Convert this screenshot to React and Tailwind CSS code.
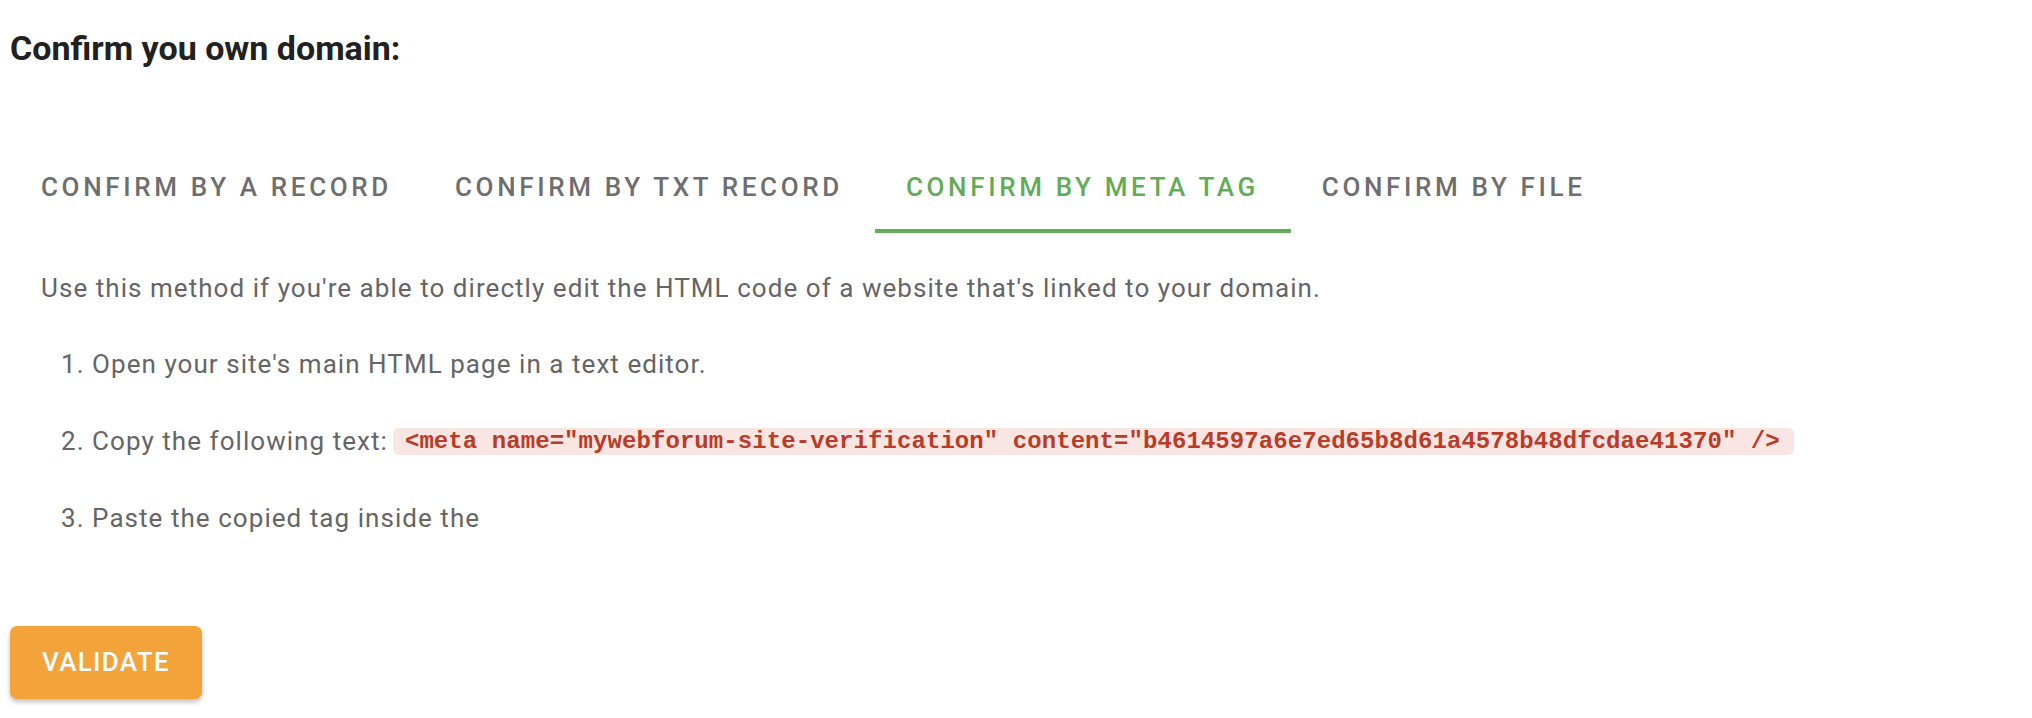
import React, { useState } from 'react';

const tabs = [
  'Confirm by A record',
  'Confirm by TXT record',
  'Confirm by meta tag',
  'Confirm by file',
];

const metaTag = '<meta name="mywebforum-site-verification" content="b4614597a6e7ed65b8d61a4578b48dfcdae41370" />';

const App = () => {
  const [active, setActive] = useState(2);

  return (<div className="min-h-[718px] bg-white px-[10px] pt-[26px] font-['Roboto','Liberation_Sans',sans-serif]">
      <h2 className="text-[34px] leading-[44px] font-bold text-[#212121]">
        Confirm you own domain:
      </h2>

      <div className="mt-[66px] flex">
        {tabs.map((tab, i) => (<button key={tab} type="button" onClick={() => setActive(i)} className={`h-[97px] pl-[31px] pr-[32px] pt-[10px] border-b-4 text-[26px] font-medium uppercase tracking-[3.65px] ${i === active ? 'border-[#62ab57] text-[#62ab57]' : 'border-transparent text-[#6e6e6e]'}`}>
            {tab}
          </button>))}
      </div>

      <div className="px-[31px] pt-[38px] text-[26px] leading-[34px] tracking-[1.05px] text-[#656565]">
        <p>Use this method if you're able to directly edit the HTML code of a website that's linked to your domain.</p>

        <ol className="mt-[42px] flex flex-col gap-[43px] pl-[20px]">
          <li>1. Open your site's main HTML page in a text editor.</li>
          <li className="flex items-center">
            <span>2. Copy the following text:</span>
            <code className="ml-[5px] rounded-[6px] bg-[#f9e5e1] pl-[12px] pr-[14px] py-[2px] text-[24px] leading-[23px] tracking-[0.07px] font-bold text-[#b93b28] font-['Liberation_Mono','Courier_New',monospace]">
              {metaTag}
            </code>
          </li>
          <li>3. Paste the copied tag inside the</li>
        </ol>
      </div>

      <button type="button" className="mt-[91px] h-[73px] w-[192px] rounded-[7px] bg-[#f2a33a] text-[26px] font-medium uppercase tracking-[0.05em] text-white shadow-[0_3px_5px_rgba(0,0,0,0.25)]">
        Validate
      </button>
    </div>);
};

export default App;
